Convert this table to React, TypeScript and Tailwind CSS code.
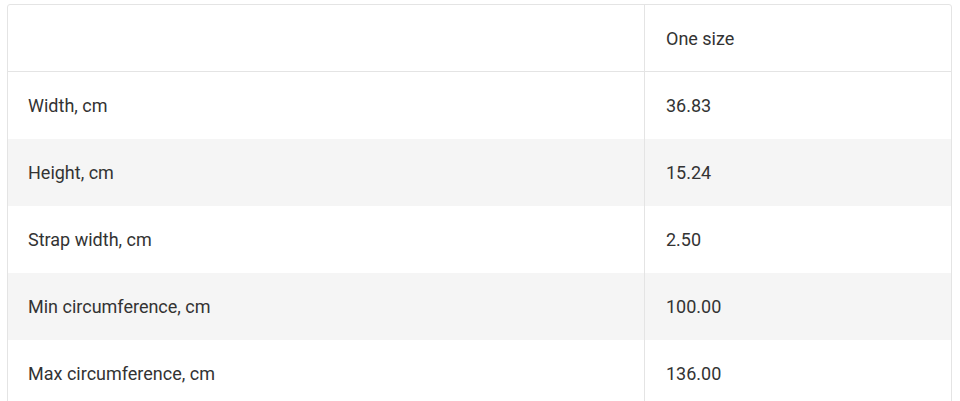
const rows = [
  { label: "Width, cm", value: "36.83" },
  { label: "Height, cm", value: "15.24" },
  { label: "Strap width, cm", value: "2.50" },
  { label: "Min circumference, cm", value: "100.00" },
  { label: "Max circumference, cm", value: "136.00" },
];

export default function App() {
  return (
    <main className="min-h-screen bg-white pl-[7px] pt-[4px] font-['Roboto',sans-serif] text-[18px] text-[#333]">
      <div className="w-[945px] rounded-[3px] border border-[#e4e4e4]">
        <div className="grid h-[67px] grid-cols-[636px_1fr] border-b border-[#e4e4e4]">
          <div />
          <div className="flex items-center border-l border-[#e4e4e4] pl-[21px]">One size</div>
        </div>
        {rows.map((row, i) => (
          <div
            key={row.label}
            className={`grid h-[67px] grid-cols-[636px_1fr] ${i % 2 === 1 ? "bg-[#f5f5f5]" : "bg-white"}`}
          >
            <div className="flex items-center pl-[20px]">{row.label}</div>
            <div className="flex items-center border-l border-[#e4e4e4] pl-[21px]">{row.value}</div>
          </div>
        ))}
      </div>
    </main>
  );
}
